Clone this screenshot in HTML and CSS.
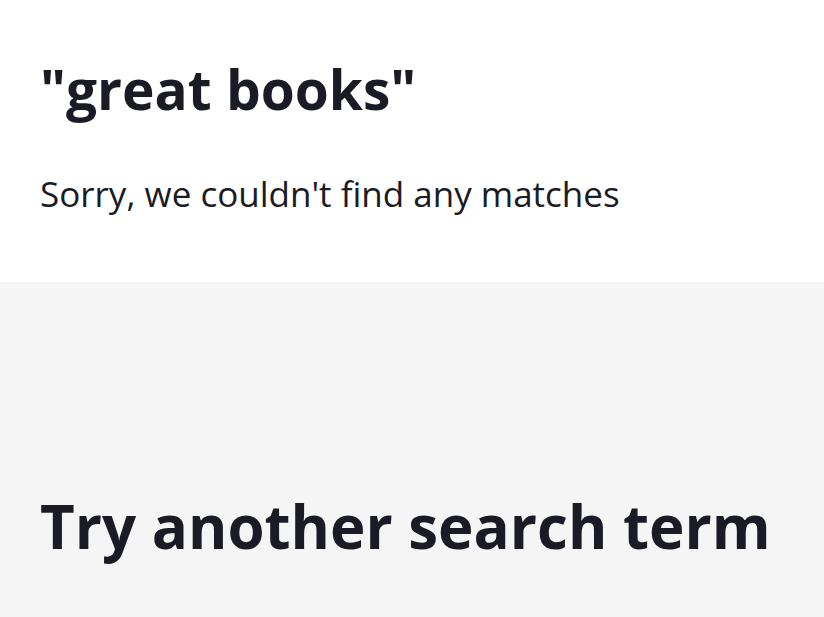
FILE: index.html
```html
<!DOCTYPE html>
<html lang="en">
<head>
<meta charset="utf-8">
<link rel="stylesheet" href="styles.css">
</head>
<body>
  <section class="results-header">
    <h1 class="query">"great books"</h1>
    <p class="message">Sorry, we couldn't find any matches</p>
  </section>
  <section class="suggest">
    <h2 class="suggest-title">Try another search term</h2>
  </section>
</body>
</html>
```
FILE: styles.css
```css
html, body {
  margin: 0;
  padding: 0;
}
body {
  font-family: "Open Sans", "Noto Sans", sans-serif;
  color: #1a1b25;
  background: #ffffff;
}
.results-header {
  padding: 56px 40px 65.5px;
}
.query {
  margin: 0;
  font-size: 55px;
  font-weight: 700;
  line-height: 66px;
}
.message {
  margin: 49px 0 0;
  font-size: 35px;
  line-height: 45.5px;
}
.suggest {
  background: #f5f5f5;
  padding: 208px 40px 80px;
}
.suggest-title {
  margin: 0;
  font-size: 60px;
  font-weight: 700;
  line-height: 72px;
}
```
